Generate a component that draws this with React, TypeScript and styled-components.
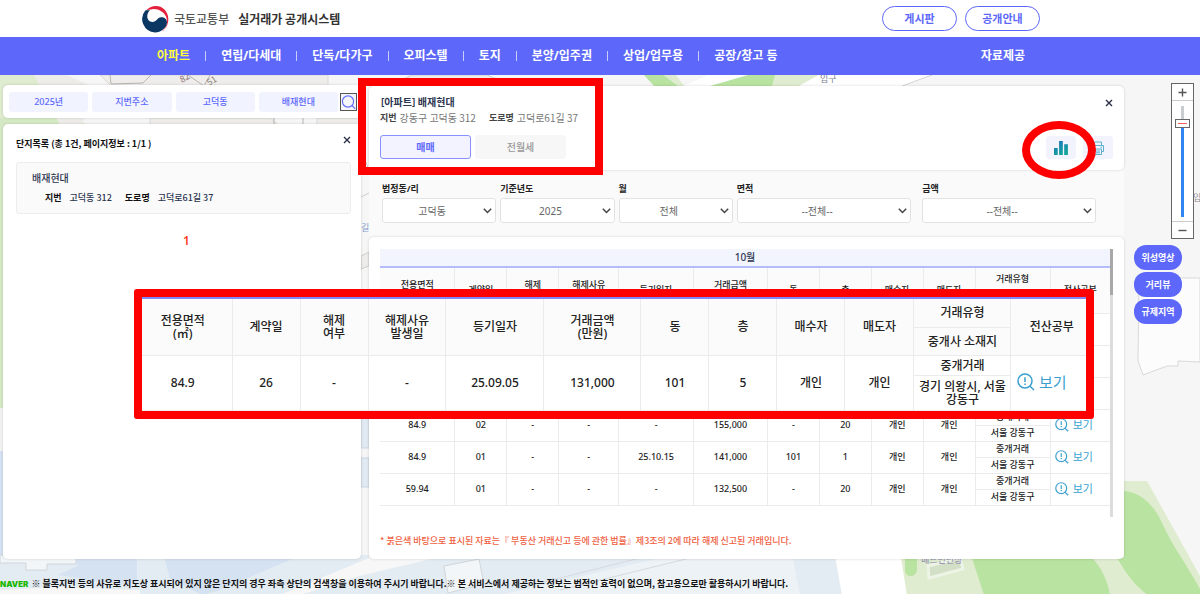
import React from "react";
import styled, { createGlobalStyle, css } from "styled-components";

const c = {
  brand: "#5d68fb",
  tint: "#f1f3fe",
  ink: "#222222",
  navy: "#2c3550",
  line: "#ebebeb",
  mark: "#ff0000",
  link: "#3a9fd0",
};

const hangul = '"Noto Sans CJK KR", "Noto Sans", sans-serif';

const GlobalStyle = createGlobalStyle`
  *, *::before, *::after { box-sizing: border-box; }
  body { margin: 0; background: #ffffff; }
  body, button, select, input {
    font-family: "Noto Sans", "Noto Sans CJK KR", sans-serif;
  }
  button { cursor: pointer; padding: 0; border: 0; background: none; }
  a { text-decoration: none; color: inherit; }
  h1, h2, p, ul, dl, dd { margin: 0; padding: 0; }
`;

const Page = styled.div`
  display: flex;
  flex-direction: column;
  min-height: 100vh;
  padding-bottom: 1px;
`;

/* ---------- header ---------- */

const Header = styled.header`
  display: flex;
  align-items: center;
  justify-content: space-between;
  height: 37px;
  padding: 0 160px 0 141px;
`;

const Brand = styled.a`
  display: flex;
  align-items: center;
  gap: 5px;
  font-family: ${hangul};
  font-size: 12px;
  line-height: 16px;
  font-weight: 500;
  color: #555555;
`;

const Ministry = styled.span`
  margin-right: 4px;
`;

const SystemName = styled.h1`
  font-size: 12px;
  line-height: 16px;
  font-weight: 700;
  color: #333333;
`;

const HeaderLinks = styled.div`
  display: flex;
  gap: 8px;
`;

const PillLink = styled.a`
  display: flex;
  align-items: center;
  justify-content: center;
  width: 75px;
  height: 25px;
  border: 1px solid ${c.brand};
  border-radius: 13px;
  font-size: 11px;
  line-height: 14px;
  font-weight: 700;
  color: ${c.brand};
`;

const Nav = styled.nav`
  display: flex;
  align-items: center;
  justify-content: space-between;
  height: 38px;
  padding: 0 175px 0 157px;
  background: ${c.brand};
  font-size: 12px;
  line-height: 16px;
  font-weight: 700;
  color: #ffffff;
`;

const NavList = styled.ul`
  display: flex;
  align-items: center;
  list-style: none;
`;

const NavItem = styled.li`
  display: flex;
  align-items: center;
  & + &::before {
    content: "";
    width: 1px;
    height: 10px;
    margin: 0 15px;
    background: #c9cdfd;
  }
`;

const NavLink = styled.a<{ $active?: boolean }>`
  color: ${(p) => (p.$active ? "#ffff3c" : "#ffffff")};
`;

/* ---------- map stage ---------- */

const Stage = styled.main`
  position: relative;
  flex: 1;
  display: flex;
  flex-direction: column;
  overflow: hidden;
`;

const MapArt = styled.svg`
  position: absolute;
  inset: 0;
  width: 100%;
  height: 100%;
`;

const Workspace = styled.div`
  position: relative;
  flex: 1;
  display: flex;
  align-items: stretch;
  padding: 10px 6px 0 3px;
`;

const cardLook = css`
  background: #ffffff;
  border-radius: 5px;
  box-shadow: 0 0 3px rgba(0, 0, 0, 0.16);
`;

const SideColumn = styled.aside`
  display: flex;
  flex-direction: column;
  gap: 6px;
  width: 358px;
  margin-right: 8px;
`;

const SearchCard = styled.form`
  ${cardLook}
  display: flex;
  align-items: center;
  gap: 2px;
  height: 33px;
  padding: 0 4px 0 6px;
`;

const Chips = styled.div`
  flex: 1;
  display: flex;
  gap: 4px;
`;

const Chip = styled.button`
  flex: 1;
  height: 20px;
  border-radius: 3px;
  background: ${c.tint};
  font-size: 9px;
  line-height: 12px;
  font-weight: 500;
  color: ${c.brand};
`;

const SearchButton = styled.button`
  display: flex;
  width: 17px;
  height: 18px;
  border: 1px solid #555555;
  background: #f4f4fb;
`;

const ListCard = styled.section`
  ${cardLook}
  flex: 1;
  padding: 12px 10px 12px 13px;
`;

const ListHead = styled.div`
  display: flex;
  justify-content: space-between;
  align-items: flex-start;
  margin-bottom: 10px;
`;

const ListTitle = styled.h2`
  font-family: ${hangul};
  font-size: 9px;
  line-height: 16px;
  font-weight: 700;
  color: #111111;
`;

const CloseButton = styled.button`
  display: flex;
  width: 8px;
  height: 8px;
`;

const Estate = styled.article`
  padding: 8px 15px;
  border: 1px solid #ededed;
  border-radius: 3px;
  background: #fafafa;
  font-size: 10px;
  line-height: 14px;
  color: ${c.navy};
`;

const EstateName = styled.a`
  display: block;
  font-weight: 500;
`;

const Address = styled.dl<{ $muted?: boolean }>`
  display: flex;
  gap: ${(p) => (p.$muted ? "3px" : "8px")};
  font-family: ${hangul};
  font-size: ${(p) => (p.$muted ? "10px" : "9px")};
  line-height: 14px;
  font-weight: ${(p) => (p.$muted ? 400 : 500)};
  color: ${(p) => (p.$muted ? "#777777" : c.navy)};
  margin: ${(p) => (p.$muted ? "1px 0 0" : "6px 0 0 13px")};
  dt {
    font-size: 9px;
    font-weight: 700;
    color: ${(p) => (p.$muted ? "#444444" : "#111111")};
  }
  dd + dt {
    margin-left: ${(p) => (p.$muted ? "10px" : "5px")};
  }
`;

const Pager = styled.div`
  margin-top: 19px;
  padding-left: 6px;
  text-align: center;
  font-size: 12px;
  line-height: 16px;
  font-weight: 600;
  color: #ff3a1a;
`;

/* ---------- detail column ---------- */

const Detail = styled.section`
  flex: 1;
  min-width: 0;
  display: flex;
  flex-direction: column;
  margin-top: 1px;
  background: #fafafa;
  border-radius: 5px;
`;

const SummaryCard = styled.div`
  ${cardLook}
  display: flex;
  justify-content: space-between;
  height: 84px;
  padding: 9px 11px 11px;
`;

const SummaryTitle = styled.h2`
  margin-left: 1px;
  font-size: 10px;
  line-height: 15px;
  font-weight: 600;
  color: ${c.navy};
`;

const Tabs = styled.div`
  display: flex;
  gap: 4px;
  margin-top: 10px;
`;

const Tab = styled.button<{ $active?: boolean }>`
  width: 91px;
  height: 24px;
  border-radius: 3px;
  border: 1px solid ${(p) => (p.$active ? "#8791ff" : "#f7f7f7")};
  background: ${(p) => (p.$active ? "#f2f3ff" : "#f7f7f7")};
  font-size: 10px;
  line-height: 14px;
  font-weight: ${(p) => (p.$active ? 700 : 500)};
  color: ${(p) => (p.$active ? c.brand : "#999999")};
`;

const SummaryTools = styled.div`
  display: flex;
  flex-direction: column;
  align-items: flex-end;
  justify-content: space-between;
  padding-top: 4px;
`;

const ToolRow = styled.div`
  position: relative;
  display: flex;
  gap: 7px;
`;

const ToolButton = styled.button`
  display: flex;
  align-items: center;
  justify-content: center;
  width: 30px;
  height: 23px;
  border-radius: 3px;
  background: #f3f3fe;
`;

const Filters = styled.form`
  display: flex;
  gap: 11px;
  padding: 12px 28px 14px 13px;
`;

const FilterGroup = styled.div<{ $grow: number }>`
  flex: ${(p) => p.$grow} 1 0;
  display: flex;
  gap: 4px;
`;

const Field = styled.label<{ $grow: number }>`
  flex: ${(p) => p.$grow} 1 0;
  min-width: 0;
  display: flex;
  flex-direction: column;
  gap: 2px;
  font-size: 9px;
  line-height: 14px;
  font-weight: 700;
  color: ${c.ink};
`;

const SelectBox = styled.span`
  position: relative;
  display: flex;
  svg {
    position: absolute;
    right: 4px;
    top: 10px;
    pointer-events: none;
  }
`;

const Select = styled.select`
  appearance: none;
  width: 100%;
  height: 25px;
  padding: 0 14px 0 0;
  border: 1px solid #e2e2e2;
  border-radius: 3px;
  background: #ffffff;
  font-size: 10px;
  line-height: 14px;
  text-align: center;
  text-align-last: center;
  color: #666666;
`;

const TableCard = styled.div`
  ${cardLook}
  flex: 1;
  padding: 12px 11px 8px;
`;

const Scroller = styled.div`
  display: flex;
  height: 268px;
`;

const ScrollBar = styled.div`
  flex: none;
  width: 3px;
  background: #dcdcdc;
  &::before {
    content: "";
    display: block;
    height: 46px;
    background: #a8a8a8;
  }
`;

const DealsTable = styled.table<{ $large?: boolean }>`
  flex: 1;
  width: 100%;
  align-self: flex-start;
  table-layout: fixed;
  border-collapse: collapse;
  font-size: ${(p) => (p.$large ? "12px" : "9px")};
  line-height: ${(p) => (p.$large ? "13px" : "10px")};
  font-weight: 500;
  color: ${c.ink};
  text-align: center;
  caption {
    height: 17px;
    background: #f3f5fe;
    font-size: 10px;
    line-height: 17px;
    color: ${c.navy};
  }
  thead {
    background: #fbfbfb;
    border-top: 2px solid ${(p) => (p.$large ? "#7f89fb" : "#b5bcfd")};
  }
  th,
  td {
    padding: 0;
    font-weight: 500;
    border: solid ${c.line};
    border-width: 0 1px 1px 0;
  }
  th:first-child[rowspan],
  td:first-child[rowspan] {
    padding-right: ${(p) => (p.$large ? "8px" : "0")};
  }
  th:last-child[rowspan],
  td:last-child[rowspan] {
    border-right: 0;
  }
  th:last-child[rowspan] {
    padding-left: ${(p) => (p.$large ? "6px" : "0")};
  }
`;

const Row = styled.tr<{ $h: number }>`
  height: ${(p) => p.$h}px;
`;

const ViewLink = styled.a<{ $large?: boolean }>`
  display: inline-flex;
  align-items: center;
  gap: 4px;
  font-size: ${(p) => (p.$large ? "15px" : "11px")};
  line-height: 16px;
  font-weight: 400;
  color: ${c.link};
  margin-right: ${(p) => (p.$large ? "14px" : "13px")};
`;

const Note = styled.p`
  margin-top: 16px;
  font-family: ${hangul};
  font-size: 9px;
  line-height: 16px;
  font-weight: 500;
  color: #f0603f;
`;

/* ---------- map tools ---------- */

const MapTools = styled.div`
  display: flex;
  flex-direction: column;
  align-items: flex-end;
  width: 70px;
`;

const Zoom = styled.div`
  display: flex;
  flex-direction: column;
  align-items: center;
  justify-content: space-between;
  width: 23px;
  height: 156px;
  margin-top: -2px;
  border: 1px solid #666666;
  background: #ffffff;
`;

const ZoomButton = styled.button`
  display: flex;
  align-items: center;
  justify-content: center;
  width: 100%;
  height: 17px;
  &:first-child {
    border-bottom: 1px solid #cccccc;
  }
  &:last-child {
    border-top: 1px solid #cccccc;
  }
`;

const ZoomRange = styled.input`
  appearance: none;
  writing-mode: vertical-lr;
  direction: rtl;
  width: 15px;
  height: 111px;
  margin: 0;
  background: linear-gradient(#c9ccd0 0 14px, #2f86f0 14px) center / 3px 100% no-repeat;
  &::-webkit-slider-thumb {
    appearance: none;
    width: 15px;
    height: 9px;
    border: 1px solid #666666;
    background: linear-gradient(#ffffff 0 3px, #ff5a5a 3px 4px, #ffffff 4px);
    box-shadow: inset 2px 0 #ffffff, inset -2px 0 #ffffff;
  }
`;

const Layers = styled.div`
  display: flex;
  flex-direction: column;
  gap: 2px;
  align-self: stretch;
  align-items: flex-start;
  margin-top: 6px;
  padding-left: 10px;
`;

const LayerButton = styled.button`
  width: 48px;
  height: 25px;
  border-radius: 12px;
  background: ${c.brand};
  font-size: 9px;
  line-height: 12px;
  font-weight: 700;
  color: #ffffff;
`;

const Notice = styled.footer`
  position: relative;
  display: flex;
  align-items: center;
  gap: 3px;
  padding: 17px 0 2px;
  font-family: ${hangul};
  font-size: 9px;
  line-height: 16px;
  font-weight: 700;
  color: #111111;
`;

const Naver = styled.span`
  font-family: Inter, sans-serif;
  font-size: 8px;
  font-weight: 900;
  color: #1ab800;
`;

/* ---------- highlight marks ---------- */

const TitleMark = styled.div`
  position: absolute;
  left: 358px;
  top: 3px;
  width: 245px;
  height: 97px;
  border: 8px solid ${c.mark};
  pointer-events: none;
`;

const ChartMark = styled.div`
  position: absolute;
  right: 17px;
  top: -15px;
  width: 74px;
  height: 58px;
  border: 8px solid ${c.mark};
  border-radius: 50%;
  pointer-events: none;
`;

const Magnified = styled.div`
  position: absolute;
  left: 134px;
  right: 106px;
  top: 214px;
  border: 8px solid ${c.mark};
  border-radius: 3px;
  background: #ffffff;
`;

/* ---------- icons ---------- */

const Emblem = () => (
  <svg width="28" height="28" viewBox="0 0 28 28" aria-hidden="true">
    <path d="M5 5.800C9 .5 18-1 23.500 4.500c5 5.300 5 13.500.5 19-1.200 1.500-2.200 2.500-3.500 3.200C26 22 27 16 25 11.500 23 7 17 3.500 11.500 4.200 9 4.500 7 5 5 5.800z" fill="#e4203c" />
    <path d="M4.500 5.200A13.500 13.500 0 0 0 14 27.500c6 0 11.500-4.500 12-10 0-3.700-3-5.500-6-5.300-3.500.2-4.500 4.800-8.500 4.800s-6-4-5-7.500C6.900 8 7.600 6.800 9 5.300z" fill="#0b3763" />
  </svg>
);

const SearchIcon = () => (
  <svg width="15" height="16" viewBox="0 0 15 16" fill="none" stroke="#6670f5" aria-hidden="true">
    <circle cx="7" cy="7.500" r="5.600" strokeWidth="1.200" />
    <path d="M11 11.500l3.300 3.400" strokeWidth="1.200" />
  </svg>
);

const CrossIcon = () => (
  <svg width="8" height="8" viewBox="0 0 8 8" stroke="#2b3048" strokeWidth="1.400" aria-hidden="true">
    <path d="M1 1l6 6M7 1L1 7" />
  </svg>
);

const ChartIcon = () => (
  <svg width="16" height="16" viewBox="0 0 16 16" aria-hidden="true">
    <defs>
      <linearGradient id="bars" x1="0" y1="0" x2="0.5" y2="1">
        <stop offset="0" stopColor="#1c6fc0" />
        <stop offset="1" stopColor="#12a59a" />
      </linearGradient>
    </defs>
    <path d="M1 8h3.700v7H1zM6.100 1h3.700v14H6.100zM11.200 4.200h3.700V15h-3.700z" fill="url(#bars)" />
  </svg>
);

const PrintIcon = () => (
  <svg width="14" height="14" viewBox="0 0 14 14" fill="none" stroke="#5fb0cf" aria-hidden="true">
    <path d="M3.500 4V1h7v3M3.500 10.500h-2V4.500h11v6h-2" />
    <path d="M3.500 8h7v5.500h-7zM5 10h4M5 11.800h4M9.500 6.200h1.500" />
  </svg>
);

const Chevron = () => (
  <svg width="9" height="6" viewBox="0 0 9 6" fill="none" stroke="#444444" strokeWidth="1.500" aria-hidden="true">
    <path d="M.8.8l3.700 3.700L8.200.8" />
  </svg>
);

const InspectIcon = ({ size }: { size: number }) => (
  <svg width={size} height={size} viewBox="0 0 18 18" fill="none" stroke={c.link} strokeWidth="1.500" aria-hidden="true">
    <circle cx="8" cy="8" r="7" />
    <path d="M8 4.200v4.800M8 10.400v1.600M12.800 13l4.200 4" />
  </svg>
);

const SignIcon = ({ plus }: { plus?: boolean }) => (
  <svg width="9" height="9" viewBox="0 0 9 9" stroke="#555555" strokeWidth="1.400" aria-hidden="true">
    <path d={plus ? "M.5 4.500h8M4.500.5v8" : "M.5 4.500h8"} />
  </svg>
);

const CityMap = () => (
  <MapArt viewBox="0 75 1200 519" preserveAspectRatio="xMidYMid slice" aria-hidden="true">
    <rect y="75" width="1200" height="519" fill="#f6f6f6" />
    <path d="M0 75h34l22 14v34l38 1H0z" fill="#dfeccf" />
    <path d="M0 118h60l35 8H0zM0 118h4v290H0z" fill="#d5e9c4" />
    <path d="M34 75h33l34 16-20 34H60z" fill="#eeece9" />
    <path d="M100 75h228v12H112zM150 118h120l10 8H150zM317 118h44v8h-44z" fill="#efedeb" stroke="#dcdad6" />
    <path d="M110 75l1 9 32-1 8-8M188 75l16 11 6-11M274 118v8M303 118v8" fill="none" stroke="#b9b5b0" />
    <path d="M404 79l8-4h75l26 11M361 197l8-4M361 256l8-4v14l-8 3zM361 150l8 20" fill="#efedeb" stroke="#cfcfcb" />
    <path d="M644 75h20l14 11h-24zM707 86l38-11h36l-4 11z" fill="#b9e3a0" />
    <path d="M664 75h12l8 11h-6zM775 75h44l-20 11h-27z" fill="#dfeccf" />
    <path d="M684 86l24-11h40l-38 11zM819 75h112l-30 11H799z" fill="#ffffff" />
    <path d="M902 86l30-11" stroke="#d4d4d4" />
    <path d="M0 408h3v43H0z" fill="#f3f3f3" />
    <path d="M0 451h3v144H0z" fill="#d5e2f1" />
    <path d="M361 418h8v30h-8zM361 458h8v29h-8z" fill="#e1eaf3" stroke="#c9d5e0" />
    <path d="M0 555h369v40H0z" fill="#e3ebf3" />
    <path d="M0 563h26v7h21v-6h29v-9H0z" fill="#f3f6f8" stroke="#cfd6dc" />
    <path d="M76 559h61v22l-12 4-67-10 20-9zM165 559h127l-75 32-15 4-32-16z" fill="#d5e2f1" />
    <path d="M0 590l60-3 80 3v5H0z" fill="#f7f7f7" />
    <path d="M280 595l89-37h66l-75 18-60 19z" fill="#f7f7f7" />
    <path d="M360 576l75-18h400l7 37H300z" fill="#e3ebf3" />
    <path d="M500 595l160-37h133l7 37z" fill="#edf2f6" />
    <path d="M520 588l120-30M560 590l130-32" stroke="#d5dade" />
    <path d="M444 566l35-7 5 25-36 9z" fill="#f3f6f8" stroke="#cfd6dc" />
    <path d="M836 558h66l5 37h-65z" fill="#ffffff" />
    <path d="M901 558l223-77h23l53 95v19H907z" fill="#dfeccf" />
    <path d="M1124 491c18 2 30 14 38 32 12 26 24 40 38 66v6h-52c-14-10-22-22-31-37h7zM972 558h120c10 10 16 24 18 37H984z" fill="#b9e3a0" />
    <path d="M905 558h12v12c-1 8-12 8-12 0z" fill="#b9e3a0" />
    <path d="M928 566l32-8 3 11-34 9z" fill="#d3dfc6" stroke="#edf4e6" strokeWidth="3" />
    <path d="M1200 278h-61l-1 83 5 14 24-9h11v-5l22 1z" fill="#fcfcfc" stroke="#d9d9d9" />
    <g fontFamily='"Noto Sans CJK KR", sans-serif' fontSize="9">
      <text x="182" y="83" fill="#8c6f76" transform="rotate(-30 182 83)">82</text>
      <text x="209" y="86" fill="#8c8478" transform="rotate(-30 209 86)">51</text>
      <text x="820" y="82" fill="#7c8592">입구</text>
      <text x="361" y="231" fill="#7f9bcc">길이</text>
      <text x="921" y="563" fill="#8b86b0">배드민턴장</text>
      <text x="1193" y="201" fill="#8d8d95">입</text>
    </g>
  </MapArt>
);

/* ---------- data ---------- */

const menu = ["아파트", "연립/다세대", "단독/다가구", "오피스텔", "토지", "분양/입주권", "상업/업무용", "공장/창고 등"];
const layers = ["위성영상", "거리뷰", "규제지역"];
const smallCols = [75, 52, 52, 60, 75, 74, 52, 52, 52, 52, 75, 60];
const largeCols = [90, 68, 68, 78, 98, 97, 68, 68, 68, 69, 97, 75];

type Deal = { cells: string[]; kind: string; place: string };

const first: Deal = {
  cells: ["84.9", "26", "-", "-", "25.09.05", "131,000", "101", "5", "개인", "개인"],
  kind: "중개거래",
  place: "경기 의왕시, 서울 강동구",
};
const blank: Deal = { cells: Array(10).fill(""), kind: "", place: "" };
const deals: Deal[] = [
  blank,
  blank,
  blank,
  { cells: ["84.9", "02", "-", "-", "-", "155,000", "-", "20", "개인", "개인"], kind: "중개거래", place: "서울 강동구" },
  { cells: ["84.9", "01", "-", "-", "25.10.15", "141,000", "101", "1", "개인", "개인"], kind: "중개거래", place: "서울 강동구" },
  { cells: ["59.94", "01", "-", "-", "-", "132,500", "-", "20", "개인", "개인"], kind: "중개거래", place: "서울 강동구" },
];

const heads: string[][] = [
  ["전용면적", "(㎡)"],
  ["계약일"],
  ["해제", "여부"],
  ["해제사유", "발생일"],
  ["등기일자"],
  ["거래금액", "(만원)"],
  ["동"],
  ["층"],
  ["매수자"],
  ["매도자"],
];

type DealsProps = { caption?: string; rows: Deal[]; cols: number[]; large?: boolean };

function Deals({ caption, rows, cols, large }: DealsProps) {
  const total = cols.reduce((a, b) => a + b, 0);
  return (
    <DealsTable $large={large}>
      {caption && <caption>{caption}</caption>}
      <colgroup>
        {cols.map((w, i) => (
          <col key={i} style={{ width: `${(w / total) * 100}%` }} />
        ))}
      </colgroup>
      <thead>
        <Row $h={large ? 29 : 23}>
          {heads.map((lines) => (
            <th key={lines[0]} rowSpan={2} scope="col">
              {lines[0]}
              {lines[1] && <br />}
              {lines[1]}
            </th>
          ))}
          <th scope="col">거래유형</th>
          <th rowSpan={2} scope="col">전산공부</th>
        </Row>
        <Row $h={large ? 28 : 23}>
          <th scope="col">중개사 소재지</th>
        </Row>
      </thead>
      <tbody>
        {rows.map((deal, i) => (
          <React.Fragment key={i}>
            <Row $h={large ? 20 : 16}>
              {deal.cells.map((cell, j) => (
                <td key={j} rowSpan={2}>{cell}</td>
              ))}
              <td>{deal.kind}</td>
              <td rowSpan={2}>
                {deal.kind && (
                  <ViewLink href="#view" $large={large}>
                    <InspectIcon size={large ? 18 : 14} />
                    보기
                  </ViewLink>
                )}
              </td>
            </Row>
            <Row $h={large ? 35 : 16}>
              <td>{deal.place}</td>
            </Row>
          </React.Fragment>
        ))}
      </tbody>
    </DealsTable>
  );
}

function Filter({ label, value, grow }: { label: string; value: string; grow: number }) {
  return (
    <Field $grow={grow}>
      {label}
      <SelectBox>
        <Select defaultValue={value}>
          <option>{value}</option>
        </Select>
        <Chevron />
      </SelectBox>
    </Field>
  );
}

export default function App() {
  return (
    <Page>
      <GlobalStyle />
      <Header>
        <Brand href="#home">
          <Emblem />
          <Ministry>국토교통부</Ministry>
          <SystemName>실거래가 공개시스템</SystemName>
        </Brand>
        <HeaderLinks>
          <PillLink href="#board">게시판</PillLink>
          <PillLink href="#guide">공개안내</PillLink>
        </HeaderLinks>
      </Header>
      <Nav>
        <NavList>
          {menu.map((name, i) => (
            <NavItem key={name}>
              <NavLink href="#menu" $active={i === 0}>{name}</NavLink>
            </NavItem>
          ))}
        </NavList>
        <NavLink href="#data">자료제공</NavLink>
      </Nav>

      <Stage>
        <CityMap />
        <Workspace>
          <SideColumn>
            <SearchCard>
              <Chips>
                <Chip type="button">2025년</Chip>
                <Chip type="button">지번주소</Chip>
                <Chip type="button">고덕동</Chip>
                <Chip type="button">배재현대</Chip>
              </Chips>
              <SearchButton type="button" aria-label="검색">
                <SearchIcon />
              </SearchButton>
            </SearchCard>
            <ListCard>
              <ListHead>
                <ListTitle>단지목록 (총 1건, 페이지정보 : 1/1 )</ListTitle>
                <CloseButton aria-label="닫기">
                  <CrossIcon />
                </CloseButton>
              </ListHead>
              <Estate>
                <EstateName href="#estate">배재현대</EstateName>
                <Address>
                  <dt>지번</dt>
                  <dd>고덕동 312</dd>
                  <dt>도로명</dt>
                  <dd>고덕로61길 37</dd>
                </Address>
              </Estate>
              <Pager>
                <a href="#page-1">1</a>
              </Pager>
            </ListCard>
          </SideColumn>

          <Detail>
            <SummaryCard>
              <div>
                <SummaryTitle>[아파트] 배재현대</SummaryTitle>
                <Address $muted>
                  <dt>지번</dt>
                  <dd>강동구 고덕동 312</dd>
                  <dt>도로명</dt>
                  <dd>고덕로61길 37</dd>
                </Address>
                <Tabs>
                  <Tab $active>매매</Tab>
                  <Tab>전월세</Tab>
                </Tabs>
              </div>
              <SummaryTools>
                <CloseButton aria-label="닫기">
                  <CrossIcon />
                </CloseButton>
                <ToolRow>
                  <ToolButton aria-label="차트">
                    <ChartIcon />
                  </ToolButton>
                  <ToolButton aria-label="인쇄">
                    <PrintIcon />
                  </ToolButton>
                  <ChartMark />
                </ToolRow>
              </SummaryTools>
            </SummaryCard>

            <Filters>
              <FilterGroup $grow={530}>
                <Filter label="법정동/리" value="고덕동" grow={114} />
                <Filter label="기준년도" value="2025" grow={114} />
                <Filter label="월" value="전체" grow={114} />
                <Filter label="면적" value="--전체--" grow={174} />
              </FilterGroup>
              <FilterGroup $grow={174}>
                <Filter label="금액" value="--전체--" grow={1} />
              </FilterGroup>
            </Filters>

            <TableCard>
              <Scroller>
                <Deals caption="10월" rows={deals} cols={smallCols} />
                <ScrollBar />
              </Scroller>
              <Note>* 붉은색 바탕으로 표시된 자료는『 부동산 거래신고 등에 관한 법률』제3조의 2에 따라 해제 신고된 거래입니다.</Note>
            </TableCard>
          </Detail>

          <MapTools>
            <Zoom>
              <ZoomButton aria-label="확대">
                <SignIcon plus />
              </ZoomButton>
              <ZoomRange type="range" aria-label="지도 배율" min={0} max={100} defaultValue={87} />
              <ZoomButton aria-label="축소">
                <SignIcon />
              </ZoomButton>
            </Zoom>
            <Layers>
              {layers.map((name) => (
                <LayerButton key={name}>{name}</LayerButton>
              ))}
            </Layers>
          </MapTools>
        </Workspace>

        <Notice>
          <Naver>NAVER</Naver>
          <p>※ 블록지번 등의 사유로 지도상 표시되어 있지 않은 단지의 경우 좌측 상단의 검색창을 이용하여 주시기 바랍니다.※ 본 서비스에서 제공하는 정보는 법적인 효력이 없으며, 참고용으로만 활용하시기 바랍니다.</p>
        </Notice>

        <TitleMark />
        <Magnified>
          <Deals rows={[first]} cols={largeCols} large />
        </Magnified>
      </Stage>
    </Page>
  );
}
